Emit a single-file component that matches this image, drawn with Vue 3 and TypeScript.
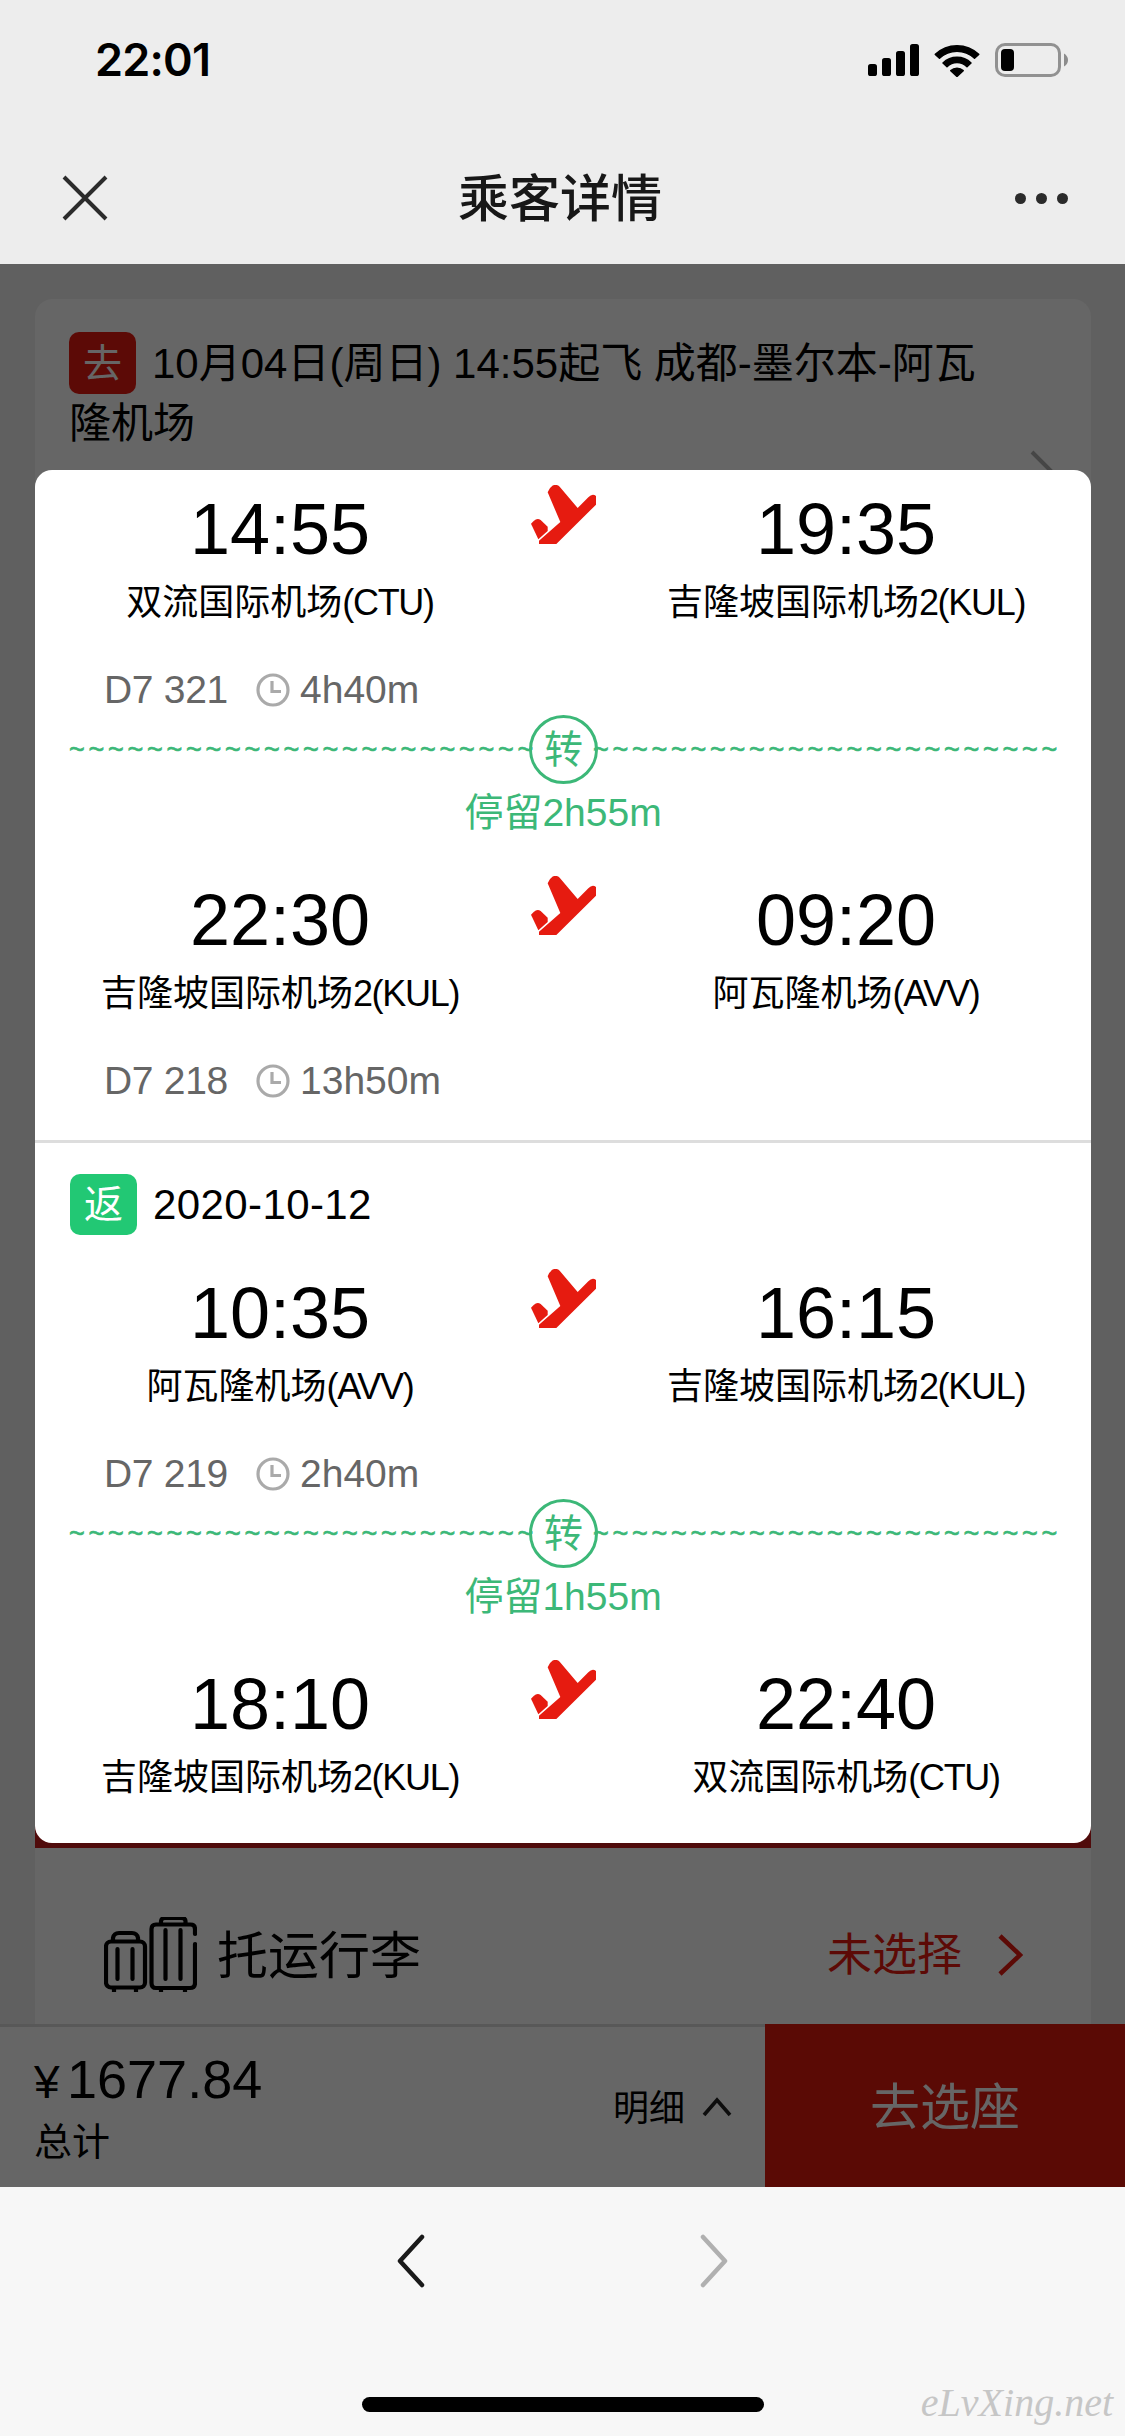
<script setup lang="ts">
interface Port {
  name: string
  code: string
}
interface Segment {
  depart: string
  from: Port
  arrive: string
  to: Port
  flight?: string
  duration?: string
  stop?: string
}
interface Journey {
  date?: string
  segments: Segment[]
}

const CTU: Port = { name: '双流国际机场', code: '(CTU)' }
const KUL: Port = { name: '吉隆坡国际机场', code: '2(KUL)' }
const AVV: Port = { name: '阿瓦隆机场', code: '(AVV)' }

const journeys: Journey[] = [
  {
    segments: [
      { depart: '14:55', from: CTU, arrive: '19:35', to: KUL, flight: 'D7 321', duration: '4h40m', stop: '停留2h55m' },
      { depart: '22:30', from: KUL, arrive: '09:20', to: AVV, flight: 'D7 218', duration: '13h50m' },
    ],
  },
  {
    date: '2020-10-12',
    segments: [
      { depart: '10:35', from: AVV, arrive: '16:15', to: KUL, flight: 'D7 219', duration: '2h40m', stop: '停留1h55m' },
      { depart: '18:10', from: KUL, arrive: '22:40', to: CTU },
    ],
  },
]

const wave = '~'.repeat(24)
</script>

<template>
  <div class="screen">
    <header class="top">
      <div class="status">
        <span class="clock">22:01</span>
        <div class="status-icons">
          <svg class="signal" width="51" height="32" viewBox="0 0 51 32">
            <rect x="0" y="20" width="9" height="12" rx="2.6" />
            <rect x="14" y="14" width="9" height="18" rx="2.6" />
            <rect x="28" y="7" width="9" height="25" rx="2.6" />
            <rect x="42" y="0" width="9" height="32" rx="2.6" />
          </svg>
          <svg class="wifi" width="46" height="33" viewBox="0 0 46 33">
            <path d="M1.300 10.400 A31.500 31.500 0 0 1 44.700 10.400 L40.500 14.300 A25.500 25.500 0 0 0 5.500 14.300 Z M9 19 A20 20 0 0 1 37 19 L33 22.600 A14.500 14.500 0 0 0 13 22.600 Z M16.800 26.600 A9.300 9.300 0 0 1 29.200 26.600 L23 32.400 Z" stroke="#000" stroke-width="1.500" stroke-linejoin="round" />
          </svg>
          <svg class="battery" width="73" height="34" viewBox="0 0 73 34">
            <rect x="1.500" y="1.500" width="63" height="31" rx="8.500" fill="none" stroke="#919191" stroke-width="3" />
            <rect x="6" y="6" width="13" height="22" rx="4" />
            <path d="M69 10.500 Q73 13 73 17 T69 23.500 Z" fill="#8c8c8c" />
          </svg>
        </div>
      </div>
      <nav class="nav">
        <svg class="close" width="46" height="46" viewBox="0 0 46 46"><path d="M2 2 L44 44 M44 2 L2 44" /></svg>
        <h1>乘客详情</h1>
        <div class="dots"><i></i><i></i><i></i></div>
      </nav>
    </header>

    <main class="stage">
      <div class="page">
        <section class="trip">
          <p><span class="badge go">去</span>10月04日(周日) 14:55起飞 成都-墨尔本-阿瓦隆机场</p>
          <svg class="trip-arrow" width="26" height="46" viewBox="0 0 26 46"><path d="M2 2 L23 23 L2 44" /></svg>
        </section>
        <div class="passenger-bar"></div>
        <section class="baggage">
          <svg class="cases" width="93" height="75" viewBox="0 0 93 75">
            <rect x="2" y="24.500" width="39" height="46" rx="5" />
            <path d="M9 24 V21 Q10 16 15 16 H28 Q33 16 34 21 V24 M13.500 32 V62 M28.500 32 V62 M10 72 V75 M32 72 V75" />
            <path d="M91 17 V12 Q91 7.500 86.500 7.500 H52 Q47.500 7.500 47.500 12 V66 Q47.500 71 52 71 H86 Q91 71 91 66 V27 M57 7 V4 Q57.500 1 61 1 H77 Q81.500 1 81.500 4 V7 M61.500 13 V62 M76.500 13 V62 M57 72 V75 M81 72 V75" />
          </svg>
          <span class="bag-name">托运行李</span>
          <span class="bag-state">未选择</span>
          <svg class="bag-arrow" width="26" height="42" viewBox="0 0 26 42"><path d="M3 2 L23 21 L3 40" /></svg>
        </section>
        <footer class="checkout">
          <div class="total">
            <div class="price"><span class="yen">¥</span>1677.84</div>
            <div class="total-label">总计</div>
          </div>
          <div class="detail">
            <span>明细</span>
            <svg width="30" height="20" viewBox="0 0 30 20"><path d="M2 18 L15 3 L28 18" /></svg>
          </div>
          <div class="seat-btn">去选座</div>
        </footer>
      </div>

      <div class="mask"></div>

      <div class="modal">
        <section v-for="(j, ji) in journeys" :key="ji" class="journey">
          <div v-if="j.date" class="date-row"><span class="badge back">返</span><span class="date">{{ j.date }}</span></div>
          <div v-for="(s, si) in j.segments" :key="si" class="segment">
            <div class="legs">
              <div class="end">
                <div class="time">{{ s.depart }}</div>
                <div class="port">{{ s.from.name }}<span>{{ s.from.code }}</span></div>
              </div>
              <svg class="plane" width="65" height="59" viewBox="0 0 195 177">
                <path d="M50 22 Q54 9 66 1 Q78 -3 86 5 L140 69 L172 37 Q184 24 195 33 V59 L76 177 H24 V167 L88 111 Z" />
                <path d="M0 116 L8 108 Q19 97 29 105 L50 125 V138 L22 163 Z" />
              </svg>
              <div class="end">
                <div class="time">{{ s.arrive }}</div>
                <div class="port">{{ s.to.name }}<span>{{ s.to.code }}</span></div>
              </div>
            </div>
            <div v-if="s.flight" class="flight">
              <span class="number">{{ s.flight }}</span>
              <svg width="34" height="34" viewBox="0 0 34 34"><circle cx="17" cy="17" r="15" /><path d="M16 8 V18.500 H25" /></svg>
              <span>{{ s.duration }}</span>
            </div>
            <div v-if="s.stop" class="transfer">
              <div class="wave-row">
                <span class="wave">{{ wave }}</span>
                <span class="ring">转</span>
                <span class="wave right">{{ wave }}</span>
              </div>
              <div class="stop">{{ s.stop }}</div>
            </div>
          </div>
        </section>
      </div>
    </main>

    <div class="browser">
      <div class="arrows">
        <svg width="30" height="54" viewBox="0 0 30 54"><path d="M26 3 L4 27 L26 51" stroke="#1a1a1a" /></svg>
        <svg width="30" height="54" viewBox="0 0 30 54"><path d="M4 3 L26 27 L4 51" stroke="#b0b0b0" /></svg>
      </div>
      <div class="home"></div>
      <span class="site">eLvXing.net</span>
    </div>
  </div>
</template>

<style>
body {
  margin: 0;
}
</style>

<style scoped>
.screen {
  width: 1125px;
  height: 2436px;
  display: flex;
  flex-direction: column;
  overflow: hidden;
  color: #000;
  font-family: "Liberation Sans", "Noto Sans CJK SC", sans-serif;
}
svg {
  display: block;
  flex: none;
}
.top {
  height: 264px;
  background: #ededed;
}
.status {
  height: 132px;
  display: flex;
  justify-content: space-between;
  box-sizing: border-box;
  padding: 30px 57px 0 95px;
}
.clock {
  font: 600 45px/60px Inter, sans-serif;
  letter-spacing: -0.8px;
}
.status-icons {
  display: flex;
  align-items: center;
  height: 60px;
}
.wifi {
  margin-left: 15px;
}
.battery {
  margin-left: 15px;
}
.nav {
  height: 132px;
  display: flex;
  align-items: center;
  justify-content: space-between;
  box-sizing: border-box;
  padding: 0 57px 0 62px;
}
.close path {
  stroke: #2b2b2b;
  stroke-width: 4;
}
.nav h1 {
  margin: 3px 3px 0 0;
  font-size: 51px;
  line-height: 60px;
  font-weight: 500;
  color: #171717;
}
.dots {
  display: flex;
  gap: 10px;
}
.dots i {
  width: 11px;
  height: 11px;
  border-radius: 50%;
  background: #2b2b2b;
}
.stage {
  position: relative;
  height: 1923px;
}
.page {
  height: 1923px;
  display: flex;
  flex-direction: column;
  background: #f1f1f1;
}
.trip {
  margin: 35px 34px 0 35px;
  height: 300px;
  box-sizing: border-box;
  padding: 35px 35px 0 34px;
  display: flex;
  justify-content: space-between;
  background: #fff;
  border-radius: 18px;
}
.trip p {
  margin: 0;
  width: 930px;
  font-size: 42px;
  line-height: 60px;
}
.badge {
  display: inline-block;
  box-sizing: border-box;
  width: 67px;
  border-radius: 10px;
  color: #fff;
  font-size: 39px;
  text-align: center;
}
.go {
  height: 62px;
  line-height: 64px;
  margin: -2px 16px 0 0;
  vertical-align: top;
  background: #e7190f;
}
.trip-arrow {
  margin-top: 116px;
}
.trip-arrow path {
  fill: none;
  stroke: #b0b0b0;
  stroke-width: 4;
}
.passenger-bar {
  height: 100px;
  margin: auto 34px 0 35px;
  background: #c81c1c;
}
.baggage {
  height: 176px;
  box-sizing: border-box;
  margin: 0 34px 0 35px;
  padding: 38px 68px 0 69px;
  display: flex;
  align-items: flex-start;
  background: #fff;
}
.cases {
  margin-top: 31px;
}
.cases rect,
.cases path {
  fill: none;
  stroke: #000;
  stroke-width: 4.2;
  stroke-linecap: round;
}
.bag-name {
  margin-left: 20px;
  font-size: 51px;
  line-height: 142px;
}
.bag-state {
  margin-left: auto;
  font-size: 45px;
  line-height: 139px;
  color: #e7190f;
}
.bag-arrow {
  margin: 48px 0 0 35px;
}
.bag-arrow path {
  fill: none;
  stroke: #e7190f;
  stroke-width: 4.6;
}
.checkout {
  height: 163px;
  display: flex;
  background: #fff;
  flex: none;
}
.total {
  flex: 1;
  padding-left: 34px;
  border-top: 3px solid #dcdcdc;
}
.price {
  margin-top: 22px;
  font-size: 54px;
  line-height: 60px;
}
.yen {
  display: inline-block;
  width: 33px;
  font-size: 46px;
}
.total-label {
  font-size: 38px;
  line-height: 61px;
}
.detail {
  width: 152px;
  display: flex;
  align-items: center;
  border-top: 3px solid #dcdcdc;
  padding-bottom: 4px;
  font-size: 36px;
}
.detail svg {
  margin: 3px 0 0 17px;
}
.detail path {
  fill: none;
  stroke: #222;
  stroke-width: 3.6;
}
.seat-btn {
  width: 360px;
  font-size: 50px;
  line-height: 169px;
  height: 163px;
  text-align: center;
  color: #fff;
  background: #e1190d;
}
.mask {
  position: absolute;
  inset: 0;
  background: rgba(0, 0, 0, 0.6);
}
.modal {
  position: absolute;
  top: 206px;
  left: 35px;
  right: 34px;
  height: 1373px;
  box-sizing: border-box;
  padding-top: 18px;
  background: #fff;
  border-radius: 17px;
}
.journey {
  padding: 0 34px;
}
.journey + .journey {
  margin-top: 34px;
  border-top: 3px solid #ddd;
}
.date-row {
  display: flex;
  align-items: center;
  margin: 31px 0 37px;
  padding-left: 1px;
  height: 61px;
  font-size: 42px;
}
.date {
  letter-spacing: 0.4px;
}
.back {
  height: 61px;
  line-height: 62px;
  margin-right: 16px;
  background: #22c874;
}
.segment + .segment {
  margin-top: 38px;
}
.legs {
  display: flex;
  justify-content: space-between;
  align-items: flex-start;
  height: 144px;
}
.end {
  width: 422px;
  text-align: center;
  white-space: nowrap;
}
.time {
  margin-top: -1px;
  font-size: 72px;
  line-height: 84px;
}
.port {
  margin-top: 1px;
  font-size: 36px;
  line-height: 61px;
}
.port span {
  letter-spacing: -1.3px;
}
.plane {
  margin-top: -3px;
  fill: #e61b10;
}
.flight {
  display: flex;
  align-items: center;
  margin-top: 32px;
  padding-left: 35px;
  height: 51px;
  font-size: 39px;
  color: #666;
}
.number {
  width: 152px;
  letter-spacing: -0.3px;
}
.flight svg {
  margin-right: 10px;
  fill: none;
  stroke: #aaa;
  stroke-width: 3.2;
}
.transfer {
  color: #3cb878;
}
.wave-row {
  height: 69px;
  display: flex;
}
.wave {
  flex: 1;
  min-width: 0;
  display: flex;
  font-size: 27px;
  line-height: 71px;
  letter-spacing: 3.73px;
  white-space: nowrap;
  -webkit-text-stroke: 0.6px #3cb878;
}
.wave.right {
  justify-content: flex-end;
  margin-right: -4px;
  padding-right: 0;
}
.ring {
  flex: none;
  margin: 0 -2px 0 0;
  width: 69px;
  height: 69px;
  box-sizing: border-box;
  border: 3px solid #3cb878;
  border-radius: 50%;
  font-size: 39px;
  line-height: 63px;
  text-align: center;
}
.wave:first-child {
  flex: 0 0 460px;
}
.stop {
  font-size: 39px;
  line-height: 57px;
  text-align: center;
}
.browser {
  position: relative;
  height: 249px;
  background: #f7f7f7;
  display: flex;
  flex-direction: column;
  align-items: center;
}
.arrows {
  display: flex;
  gap: 273px;
  margin-top: 47px;
}
.arrows path {
  fill: none;
  stroke-width: 4.5;
  stroke-linecap: round;
  stroke-linejoin: round;
}
.home {
  margin-top: 109px;
  width: 402px;
  height: 15px;
  border-radius: 8px;
  background: #000;
}
.site {
  position: absolute;
  right: 12px;
  bottom: 9px;
  font: italic 40px/48px "Liberation Serif", serif;
  color: #c6c6c6;
}
</style>
